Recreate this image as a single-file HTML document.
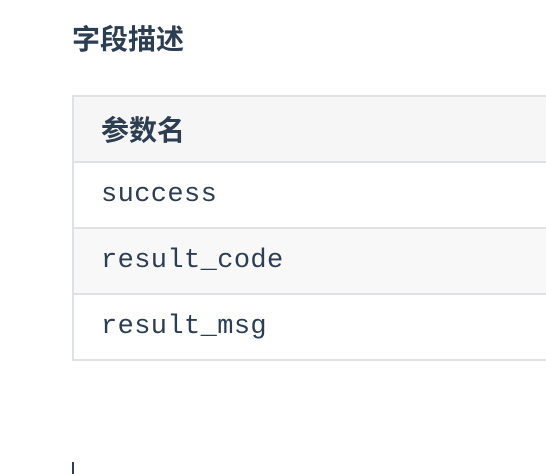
<!DOCTYPE html>
<html><head><meta charset="utf-8"><style>
html,body{margin:0;padding:0;background:#fff;width:546px;height:474px;overflow:hidden;position:relative}
.h{position:absolute;left:72px;top:20px;font:bold 28px/40px "Liberation Sans","Noto Sans CJK SC",sans-serif;color:#2c3e50;letter-spacing:0}
.t{position:absolute;left:72px;top:95px;width:500px;border-left:2px solid #dfe2e5;}
.r{height:64px;border-top:2px solid #dfe2e5;box-sizing:content-box;display:flex;align-items:center;padding-left:27px;font:27px "Liberation Mono",monospace;letter-spacing:0.4px;color:#2c3e50}
.r.last{border-bottom:2px solid #dfe2e5}
.hd{background:#f6f6f6;font:bold 28px "Liberation Sans","Noto Sans CJK SC",sans-serif;letter-spacing:0}
.g{background:#f8f8f8}
.c{position:absolute;left:72px;top:462px;width:2px;height:12px;background:#2c3e50}
</style></head><body>
<div class="h">字段描述</div>
<div class="t">
<div class="r hd">参数名</div>
<div class="r">success</div>
<div class="r g">result_code</div>
<div class="r last">result_msg</div>
</div>
<div class="c"></div>
</body></html>
